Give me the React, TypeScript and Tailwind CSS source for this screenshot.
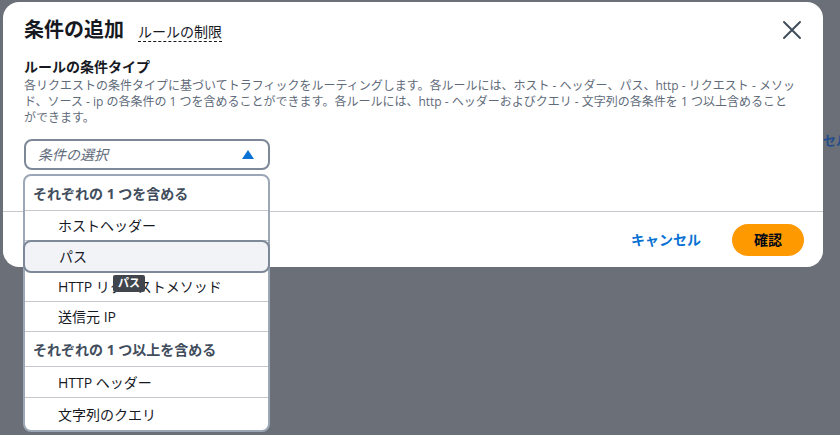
import React from "react"

const font = { fontFamily: '"Open Sans", "Noto Sans CJK JP", sans-serif' }

const descLines = [
  "各リクエストの条件タイプに基づいてトラフィックをルーティングします。各ルールには、ホスト - ヘッダー、パス、http - リクエスト - メソッ",
  "ド、ソース - ip の各条件の 1 つを含めることができます。各ルールには、http - ヘッダーおよびクエリ - 文字列の各条件を 1 つ以上含めること",
  "ができます。",
]

function CloseIcon() {
  return (
    <svg width="20" height="20" viewBox="0 0 20 20" fill="none">
      <path d="M2 2L18 18M18 2L2 18" stroke="#414d5c" strokeWidth="2" strokeLinecap="round" />
    </svg>
  )
}

function Item({ label, highlighted }: { label: string; highlighted?: boolean }) {
  if (highlighted) {
    return (
      <div className="relative z-10 -mx-[2px] -my-[1px] flex h-[33px] items-center rounded-lg border-2 border-[#7d8998] bg-[#f2f3f7] pl-[34px] text-[14px] text-[#16191f]">
        {label}
      </div>
    )
  }
  return (
    <div className="flex h-[30px] items-center border-b border-[#c6c6cd] pl-[33px] text-[14px] text-[#16191f]">
      {label}
    </div>
  )
}

function GroupHeader({ label }: { label: string }) {
  return (
    <div className="flex h-[35px] items-center border-b border-[#c6c6cd] pl-[8px] text-[14px] font-bold text-[#414d5c]">
      {label}
    </div>
  )
}

export default function App() {
  return (
    <div className="relative h-[435px] w-[840px] overflow-hidden bg-[#6b6f77]" style={font}>
      {/* page content behind the overlay */}
      <div className="absolute left-[823px] top-[131px] whitespace-nowrap text-[13px] font-bold text-[#234d8a]">セル</div>

      <div className="ml-[3px] mt-[2px] flex h-[265px] w-[820px] flex-col rounded-2xl bg-white">
        <div className="flex items-start justify-between pl-[21px] pr-[21px] pt-[14px]">
          <div className="flex items-baseline gap-[14px]">
            <h1 className="text-[20px] font-bold leading-[28px] text-[#16191f]">条件の追加</h1>
            <span className="border-b border-dashed border-[#16191f] text-[14px] leading-[18px] text-[#16191f]">
              ルールの制限
            </span>
          </div>
          <div className="mt-[4px]">
            <CloseIcon />
          </div>
        </div>

        <div className="flex-1 px-[21px] pt-[14px]">
          <div className="text-[14px] font-bold leading-[18px] text-[#16191f]">ルールの条件タイプ</div>
          <p className="mt-[2px] text-[12px] leading-[16px] text-[#5f6b7a]">
            {descLines.map((line) => (
              <span key={line} className="block whitespace-nowrap">
                {line}
              </span>
            ))}
          </p>
          <div className="mt-[13px] flex h-[31px] w-[246px] items-center justify-between rounded-lg border-2 border-[#7d8998] pl-[12px] pr-[14px]">
            <span className="text-[14px] italic text-[#5f6b7a]">条件の選択</span>
            <svg width="12" height="9" viewBox="0 0 12 9">
              <path d="M6 0L12 9H0Z" fill="#0972d3" />
            </svg>
          </div>
        </div>

        <div className="flex h-[56px] items-center justify-end gap-[31px] border-t border-[#c6c6cd] pr-[19px]">
          <button className="text-[14px] font-bold text-[#0972d3]">キャンセル</button>
          <button className="h-[32px] w-[72px] rounded-full bg-[#ff9900] text-[14px] font-bold text-[#000716]">
            確認
          </button>
        </div>
      </div>

      {/* dropdown menu */}
      <div className="absolute left-[23px] top-[174px] w-[247px] rounded-lg border-2 border-[#9ba7b6] bg-white">
        <GroupHeader label="それぞれの 1 つを含める" />
        <Item label="ホストヘッダー" />
        <Item label="パス" highlighted />
        <Item label="HTTP リクエストメソッド" />
        <Item label="送信元 IP" />
        <GroupHeader label="それぞれの 1 つ以上を含める" />
        <div className="flex h-[31px] items-center border-b border-[#c6c6cd] pl-[33px] text-[14px] text-[#16191f]">
          HTTP ヘッダー
        </div>
        <div className="flex h-[32px] items-center pl-[33px] text-[14px] text-[#16191f]">文字列のクエリ</div>
      </div>

      {/* tooltip */}
      <div className="absolute left-[113px] top-[275px] flex h-[17px] w-[32px] items-center justify-center rounded-[2px] bg-[#41464e] text-[11px] font-bold text-white">
        パス
      </div>
    </div>
  )
}
